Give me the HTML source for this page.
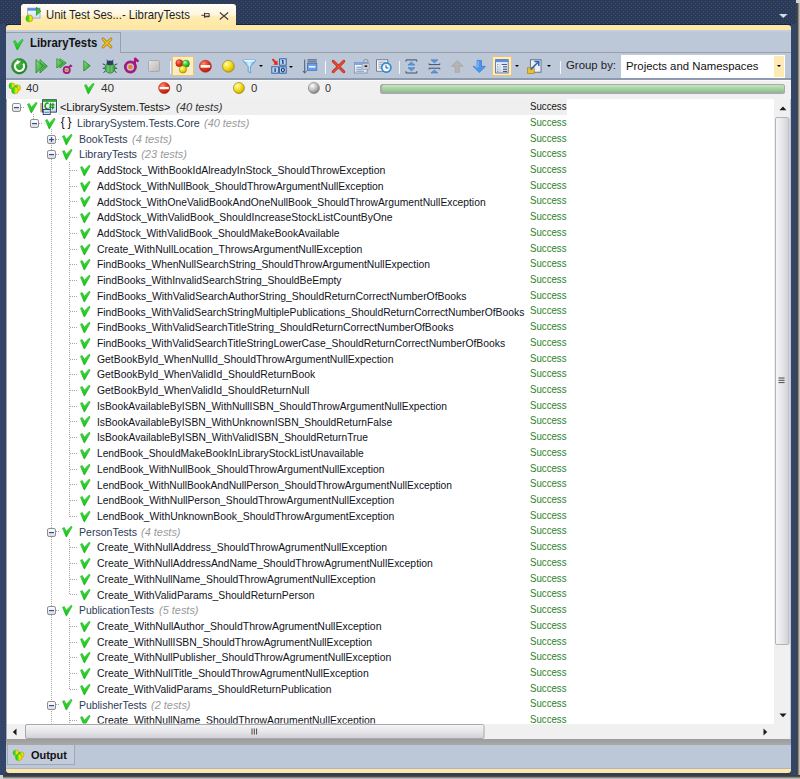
<!DOCTYPE html>
<html><head><meta charset="utf-8">
<style>
html,body{margin:0;padding:0}
body{width:800px;height:779px;position:relative;overflow:hidden;background:#d2d2d2;font-family:"Liberation Sans",sans-serif}
.a{position:absolute}
.t{position:absolute;white-space:nowrap;transform-origin:0 0;font-family:"Liberation Sans",sans-serif}
.i{position:absolute;overflow:visible}
.vd{position:absolute;width:1px;background:repeating-linear-gradient(to bottom,#a5a5a5 0,#a5a5a5 1px,transparent 1px,transparent 2px)}
.hd{position:absolute;height:1px;background:repeating-linear-gradient(to right,#a5a5a5 0,#a5a5a5 1px,transparent 1px,transparent 2px)}
.navy{background-color:#2a3a57;background-image:radial-gradient(circle at 1.5px 1.5px,#3b4e70 0.55px,transparent 0.95px),radial-gradient(circle at 3.5px 3.5px,#3b4e70 0.55px,transparent 0.95px);background-size:4px 4px}
.navyb{background-color:#33476a;background-image:radial-gradient(circle at 1.5px 1.5px,#2a3a58 0.55px,transparent 0.95px),radial-gradient(circle at 3.5px 3.5px,#2a3a58 0.55px,transparent 0.95px);background-size:4px 4px}
.sep{position:absolute;width:1px;background:#f4f6fa;top:60.7px;height:13.2px}
.dd{position:absolute;width:0;height:0;border-left:2.6px solid transparent;border-right:2.6px solid transparent;border-top:2.8px solid #000}
</style></head><body>
<svg width="0" height="0" style="position:absolute"><defs>
<linearGradient id="gchk" x1="0" y1="0" x2="0" y2="1"><stop offset="0" stop-color="#3ee83e"/><stop offset="1" stop-color="#12c012"/></linearGradient><path id="chk" d="M0.5 2.3 L2.3 1.5 L4.3 5.3 L9.3 0.1 L10.1 1.2 L4.6 10.8 L4.0 10.8 Z" fill="url(#gchk)" stroke="#0c9a0c" stroke-width="0.5" stroke-linejoin="round"/>
<linearGradient id="gexp" x1="0" y1="0" x2="0" y2="1"><stop offset="0" stop-color="#ffffff"/><stop offset="1" stop-color="#dcdcdc"/></linearGradient>
<linearGradient id="gplay" x1="0" y1="0" x2="1" y2="1"><stop offset="0" stop-color="#8ee08e"/><stop offset="1" stop-color="#1f9a1f"/></linearGradient>
<radialGradient id="gref" cx="0.4" cy="0.35" r="0.7"><stop offset="0" stop-color="#48b848"/><stop offset="1" stop-color="#1b861b"/></radialGradient>
<radialGradient id="gred" cx="0.35" cy="0.3" r="0.75"><stop offset="0" stop-color="#ff8a7a"/><stop offset="0.5" stop-color="#e83a1a"/><stop offset="1" stop-color="#b01a08"/></radialGradient>
<radialGradient id="gyel" cx="0.35" cy="0.3" r="0.75"><stop offset="0" stop-color="#fffbb0"/><stop offset="0.5" stop-color="#f4e020"/><stop offset="1" stop-color="#c8a800"/></radialGradient>
<radialGradient id="ggrn" cx="0.35" cy="0.3" r="0.75"><stop offset="0" stop-color="#c8ffb8"/><stop offset="0.5" stop-color="#40d030"/><stop offset="1" stop-color="#1a9010"/></radialGradient>
<radialGradient id="ggry" cx="0.35" cy="0.3" r="0.75"><stop offset="0" stop-color="#ffffff"/><stop offset="0.5" stop-color="#c4c4c4"/><stop offset="1" stop-color="#7c7c7c"/></radialGradient>
<linearGradient id="ghalf" x1="0" y1="0" x2="1" y2="0"><stop offset="0" stop-color="#22c81e"/><stop offset="0.38" stop-color="#3ce020"/><stop offset="0.62" stop-color="#f0e800"/><stop offset="1" stop-color="#e8c800"/></linearGradient>
<linearGradient id="gbug" x1="0" y1="0" x2="1" y2="0"><stop offset="0" stop-color="#3aa83a"/><stop offset="0.5" stop-color="#80d880"/><stop offset="1" stop-color="#2a942a"/></linearGradient>
<linearGradient id="gstop" x1="0" y1="0" x2="1" y2="1"><stop offset="0" stop-color="#e4e4e4"/><stop offset="1" stop-color="#b8b8b8"/></linearGradient>
<linearGradient id="gfun" x1="0" y1="0" x2="1" y2="0"><stop offset="0" stop-color="#5ab0e8"/><stop offset="0.5" stop-color="#d8f0ff"/><stop offset="1" stop-color="#4aa0e0"/></linearGradient>
<linearGradient id="gwin" x1="0" y1="0" x2="0" y2="1"><stop offset="0" stop-color="#ffffff"/><stop offset="1" stop-color="#d0def2"/></linearGradient>
<linearGradient id="gthumbv" x1="0" y1="0" x2="1" y2="0"><stop offset="0" stop-color="#f6f6f6"/><stop offset="0.5" stop-color="#e6e6ea"/><stop offset="1" stop-color="#cfcfd6"/></linearGradient>
<linearGradient id="gthumbh" x1="0" y1="0" x2="0" y2="1"><stop offset="0" stop-color="#f6f6f6"/><stop offset="0.5" stop-color="#e6e6ea"/><stop offset="1" stop-color="#cfcfd6"/></linearGradient>
</defs></svg>

<!-- frame & shadow -->
<div class="a" style="left:796px;top:3px;width:4px;height:776px;background:linear-gradient(to right,#363636,#4e4e4e 40%,#a4a4a4 75%,#d2d2d2)"></div>
<div class="a" style="left:3px;top:775px;width:797px;height:4px;background:linear-gradient(to bottom,#363636,#4e4e4e 40%,#a4a4a4 75%,#d2d2d2)"></div>
<div class="a navy" style="left:0;top:0;width:796px;height:775px"></div>
<div class="a navyb" style="left:0;top:24px;width:6px;height:751px"></div>
<div class="a navyb" style="left:790.5px;top:24px;width:5.5px;height:751px"></div>
<!-- top right dropdown arrow -->
<svg class="i" style="left:779.2px;top:14.3px;width:9px;height:5px" viewBox="0 0 9 5"><path d="M0 0H8.6L4.3 4Z" fill="#d4dae6"/></svg>

<!-- document tab -->
<div class="a" style="left:20.5px;top:3.8px;width:215px;height:21.2px;border-radius:3px 3px 0 0;background:linear-gradient(#fffdf7 0%,#fff6e0 50%,#ffedb8 58%,#ffe8a6 100%)"></div>
<div class="a" style="left:6px;top:24px;width:14.5px;height:1px;background:#0e2452"></div>
<div class="a" style="left:235.5px;top:24px;width:555px;height:1px;background:#0e2452"></div>
<svg class="i" style="left:25px;top:6px;width:17px;height:17px" viewBox="0 0 17 17">
 <rect x="2.6" y="2.1" width="12.4" height="10" fill="url(#gwin)" stroke="#8ca6cc" stroke-width="0.8"/>
 <rect x="2.6" y="2.1" width="12.4" height="2.6" fill="#5a8ce8"/>
 <path d="M11.4 1.3 L15.8 5.2 L11.4 9.3 Z" fill="#3cc83c" stroke="#159015" stroke-width="0.7" stroke-linejoin="round"/>
 <circle cx="4.35" cy="12.4" r="3.5" fill="url(#ghalf)" stroke="#a88a20" stroke-width="0.5"/>
</svg>
<svg class="i" style="left:201px;top:12px;width:9px;height:7px" viewBox="0 0 9 7">
 <path d="M0.3 3.3H3.5M3.5 0.8V5.8M3.5 1.6H8.2V4.8H3.5M4 4.2H8.2" stroke="#2a2a2a" stroke-width="0.9" fill="none"/>
</svg>
<svg class="i" style="left:219px;top:12px;width:10px;height:8px" viewBox="0 0 10 8">
 <path d="M0.8 0.5L9.2 7.5M9.2 0.5L0.8 7.5" stroke="#3c3c3c" stroke-width="1.1"/>
</svg>

<!-- yellow strip top -->
<div class="a" style="left:6px;top:25px;width:785px;height:5px;background:#ffe8a6;border-radius:3px 3px 0 0"></div>
<!-- panel -->
<div class="a" style="left:6px;top:29.5px;width:784.5px;height:740px;background:#bcc7d8"></div>
<div class="a" style="left:6px;top:29.5px;width:784.5px;height:2.5px;background:#c3cddc"></div>
<!-- inner tab -->
<div class="a" style="left:6px;top:32.2px;width:114.3px;height:20px;border-top:1px solid #9aa0aa;border-right:1px solid #9aa0aa"></div>
<div class="a" style="left:121px;top:52px;width:669.5px;height:1px;background:#9aa0aa"></div>
<svg class="i" style="left:12.5px;top:38.5px;width:10px;height:11px" viewBox="0 0 10 11"><path d="M0.5 2.3 L2.3 1.5 L4.3 5.3 L9.3 0.1 L10.1 1.2 L4.6 10.8 L4.0 10.8 Z" fill="url(#gchk)" stroke="#0c9a0c" stroke-width="0.5" stroke-linejoin="round"/></svg>
<svg class="i" style="left:102px;top:38px;width:10px;height:10px" viewBox="0 0 10 10">
 <path d="M1 1L9 9M9 1L1 9" stroke="#9a6a00" stroke-width="2.6" stroke-linecap="round"/>
 <path d="M1 1L9 9M9 1L1 9" stroke="#f6c818" stroke-width="1.6" stroke-linecap="round"/>
</svg>

<!-- toolbar icons -->
<svg class="i" style="left:10.5px;top:57.5px;width:17px;height:17px" viewBox="0 0 17 17">
 <circle cx="8.25" cy="8.25" r="7.7" fill="url(#gref)" stroke="#17801a" stroke-width="0.6"/>
 <path d="M12.2 5.6 A4.6 4.6 0 1 1 7.2 3.9" fill="none" stroke="#ffffff" stroke-width="2.1"/>
 <path d="M5.6 1.9 L9.6 3.6 L6.4 6.6 Z" fill="#ffffff"/>
</svg>
<svg class="i" style="left:34.5px;top:58.5px;width:14px;height:15px" viewBox="0 0 14 15">
 <path d="M1 0.6 L8.3 7.3 L1 14 Z" fill="url(#gplay)" stroke="#1e8a1e" stroke-width="0.8" stroke-linejoin="round"/>
 <path d="M5 0.6 L12.4 7.3 L5 14 L5 11.5 L9.5 7.3 L5 3.2 Z" fill="url(#gplay)" stroke="#1e8a1e" stroke-width="0.8" stroke-linejoin="round"/>
</svg>
<svg class="i" style="left:55.5px;top:57.5px;width:17px;height:17px" viewBox="0 0 17 17">
 <path d="M0.8 0.7 L7.6 4.9 L0.8 10 Z" fill="url(#gplay)" stroke="#1e8a1e" stroke-width="0.7" stroke-linejoin="round"/>
 <path d="M3.9 0.7 L10.3 4.9 L3.9 10 L3.9 8 L7.2 4.9 L3.9 2.7 Z" fill="url(#gplay)" stroke="#1e8a1e" stroke-width="0.7" stroke-linejoin="round"/>
 <circle cx="10.7" cy="11.9" r="3.1" fill="none" stroke="#a4197f" stroke-width="1.8"/>
 <circle cx="10.7" cy="11.9" r="1.5" fill="#e8841c"/>
 <path d="M13 9.6 L14.6 7.4 L16 8.6" fill="none" stroke="#a4197f" stroke-width="1.7"/>
</svg>
<svg class="i" style="left:82.5px;top:59.5px;width:8px;height:12px" viewBox="0 0 8 12">
 <path d="M0.8 0.7 L7.2 5.8 L0.8 11 Z" fill="url(#gplay)" stroke="#1e8a1e" stroke-width="0.8" stroke-linejoin="round"/>
</svg>
<svg class="i" style="left:101.5px;top:58.5px;width:16px;height:15px" viewBox="0 0 16 15">
 <path d="M3.2 6 L0.8 4.8 M3 9 L0.8 9.4 M3.6 11.6 L1.6 13.8 M12.8 6 L15.2 4.8 M13 9 L15.2 9.4 M12.4 11.6 L14.4 13.8 M6 2.6 L4.8 0.8 M10 2.6 L11.2 0.8" stroke="#2c3c5c" stroke-width="1"/>
 <ellipse cx="8" cy="9" rx="5" ry="5.2" fill="url(#gbug)" stroke="#1e6a2a" stroke-width="0.6"/>
 <ellipse cx="8" cy="3.9" rx="3.4" ry="2.4" fill="#2c3c5c"/>
 <path d="M8 4.5 V14" stroke="#1e6a2a" stroke-width="0.7"/>
</svg>
<svg class="i" style="left:123px;top:57px;width:17px;height:17px" viewBox="0 0 17 17">
 <circle cx="7.4" cy="10" r="5.1" fill="none" stroke="#a4197f" stroke-width="2.8"/>
 <circle cx="7.4" cy="10" r="2.3" fill="#e8841c"/>
 <path d="M11.6 8 L12.2 1.6 L15.4 4.6" fill="none" stroke="#a4197f" stroke-width="2.4" stroke-linejoin="round"/>
</svg>
<svg class="i" style="left:148px;top:60px;width:12px;height:12px" viewBox="0 0 12 12">
 <rect x="0.5" y="0.5" width="11" height="11" rx="1" fill="url(#gstop)" stroke="#a6a6a6" stroke-width="0.9"/>
</svg>
<div class="sep" style="left:170px"></div>
<div class="a" style="left:172px;top:56px;width:22.3px;height:19.5px;background:#fdedc3;border:1px solid #e8c47c;box-sizing:border-box"></div>
<svg class="i" style="left:175px;top:58.5px;width:15px;height:15px" viewBox="0 0 15 15">
 <circle cx="4.4" cy="4.2" r="3.6" fill="url(#gred)" stroke="#8a2010" stroke-width="0.4"/>
 <circle cx="10.9" cy="4.7" r="3.6" fill="url(#ggrn)" stroke="#1a7010" stroke-width="0.4"/>
 <circle cx="7.9" cy="10.4" r="3.6" fill="url(#gyel)" stroke="#8a6a10" stroke-width="0.5"/>
</svg>
<svg class="i" style="left:199px;top:59.5px;width:13px;height:13px" viewBox="0 0 13 13">
 <circle cx="6.4" cy="6.3" r="6" fill="url(#gred)" stroke="#a01808" stroke-width="0.5"/>
 <rect x="1.6" y="5.1" width="9.6" height="2.5" fill="#ffffff"/>
</svg>
<svg class="i" style="left:221.5px;top:59.5px;width:13px;height:13px" viewBox="0 0 13 13">
 <circle cx="6.4" cy="6.3" r="5.9" fill="url(#gyel)" stroke="#907010" stroke-width="0.6"/>
</svg>
<svg class="i" style="left:242px;top:58.5px;width:15px;height:15px" viewBox="0 0 15 15">
 <path d="M0.8 1.4 Q7 -0.2 13.8 1.4 L8.4 7.6 L8.4 13.8 L6.2 12.6 L6.2 7.6 Z" fill="url(#gfun)" stroke="#3a88c8" stroke-width="0.7" stroke-linejoin="round"/>
 <ellipse cx="7.3" cy="1.8" rx="6" ry="1" fill="#e8f6ff"/>
</svg>
<div class="dd" style="left:259.4px;top:65.4px"></div>
<svg class="i" style="left:271px;top:57.5px;width:16px;height:16px" viewBox="0 0 16 16">
 <path d="M0.8 1.4 L2.2 0.4 L5.2 3.6 L6.4 2.4 L6.8 7 L2.2 6.6 L3.6 5.2 Z" fill="#e82818"/>
 <rect x="8.6" y="0.8" width="6.6" height="6.4" fill="#b4d4f6" stroke="#2a5a9a" stroke-width="0.9"/>
 <rect x="0.8" y="8.8" width="6.6" height="6.4" fill="#b4d4f6" stroke="#2a5a9a" stroke-width="0.9"/>
 <rect x="8.6" y="8.8" width="6.6" height="6.4" fill="#b4d4f6" stroke="#2a5a9a" stroke-width="0.9"/>
 <path d="M11.9 2.2 V5.9 M4.1 10.2 V13.9 M11 2.9 L11.9 2.2" stroke="#10204a" stroke-width="1.1"/>
 <ellipse cx="11.9" cy="12" rx="1.5" ry="2" fill="none" stroke="#10204a" stroke-width="1"/>
</svg>
<div class="dd" style="left:289px;top:65.5px"></div>
<svg class="i" style="left:301.5px;top:58.5px;width:16px;height:15px" viewBox="0 0 16 15">
 <path d="M2.7 0.6 V13.6" stroke="#4c5c74" stroke-width="1"/>
 <path d="M0.9 11.8 L2.7 14.2 L4.5 11.8" fill="none" stroke="#4c5c74" stroke-width="1"/>
 <path d="M5.4 0.9 H14.8 M5.4 2.9 H14.8" stroke="#34445e" stroke-width="0.9"/>
 <rect x="5.4" y="4.5" width="9.4" height="6.8" fill="#6aa0ea" stroke="#3a6ab8" stroke-width="0.7"/>
 <rect x="6.8" y="7.1" width="6.6" height="1.4" fill="#ffffff"/>
</svg>
<div class="sep" style="left:325px"></div>
<svg class="i" style="left:331.5px;top:59.5px;width:13px;height:13px" viewBox="0 0 13 13">
 <path d="M1.2 1.2L11.8 11.8M11.8 1.2L1.2 11.8" stroke="#a02010" stroke-width="2.8" stroke-linecap="round"/>
 <path d="M1.2 1.2L11.8 11.8M11.8 1.2L1.2 11.8" stroke="#f04830" stroke-width="1.8" stroke-linecap="round"/>
</svg>
<svg class="i" style="left:353.5px;top:58.5px;width:16px;height:15px" viewBox="0 0 16 15">
 <rect x="0.6" y="3.6" width="12.6" height="10.4" fill="url(#gwin)" stroke="#7088a8" stroke-width="0.7"/>
 <rect x="0.6" y="3.6" width="12.6" height="2.4" fill="#7aa8e8"/>
 <path d="M2.4 8.2H8 M2.4 10.2H8 M2.4 12.2H10" stroke="#6a82a6" stroke-width="0.8"/>
 <rect x="8.2" y="4.4" width="7.2" height="6" rx="0.8" fill="#c8cfd8" stroke="#8a96a6" stroke-width="0.6"/>
 <path d="M9.6 4.4 V2.6 A2.2 2.2 0 0 1 14 2.6 V4.4" fill="none" stroke="#8a96a6" stroke-width="1"/>
 <rect x="10.6" y="6.4" width="2.6" height="1.6" fill="#1a1a1a"/>
</svg>
<svg class="i" style="left:376px;top:58.5px;width:16px;height:15px" viewBox="0 0 16 15">
 <rect x="0.6" y="0.8" width="11.2" height="11.4" fill="#f6f6f6" stroke="#5a6a80" stroke-width="0.8"/>
 <path d="M2.4 3.2H9.6 M2.4 5.2H9.6 M2.4 7.2H8 M2.4 9.2H7" stroke="#7a8aa0" stroke-width="0.8"/>
 <circle cx="10.3" cy="8.6" r="5" fill="#3a9ae6" stroke="#1a6ab0" stroke-width="0.6"/>
 <circle cx="10.3" cy="8.6" r="3.6" fill="#f4fbff"/>
 <path d="M10 6.2 V9 H12.4" fill="none" stroke="#1a3a6a" stroke-width="0.9"/>
</svg>
<div class="sep" style="left:399px"></div>
<svg class="i" style="left:405px;top:58.5px;width:13px;height:15px" viewBox="0 0 13 15">
 <path d="M1 2.6 V0.9 H11.8 V2.6 M1 12.2 V14 H11.8 V12.2" fill="none" stroke="#34445e" stroke-width="0.9"/>
 <path d="M6.4 2.9 L9.8 6.1 H3 Z" fill="#5a9ae6" stroke="#2a6ab8" stroke-width="0.5"/>
 <path d="M6.4 11.9 L9.8 8.7 H3 Z" fill="#5a9ae6" stroke="#2a6ab8" stroke-width="0.5"/>
</svg>
<svg class="i" style="left:427.5px;top:58.5px;width:13px;height:15px" viewBox="0 0 13 15">
 <path d="M1 4.4 V5.6 H11.8 V4.4 M1 10.4 V9.2 H11.8 V10.4" fill="none" stroke="#34445e" stroke-width="0.9"/>
 <path d="M6.4 3.9 L9.8 0.8 H3 Z" fill="#5a9ae6" stroke="#2a6ab8" stroke-width="0.5"/>
 <path d="M6.4 10.9 L9.8 14 H3 Z" fill="#5a9ae6" stroke="#2a6ab8" stroke-width="0.5"/>
</svg>
<svg class="i" style="left:450.5px;top:59.5px;width:13px;height:13px" viewBox="0 0 13 13">
 <path d="M6.3 0.4 L12.2 6.3 H8.4 V12.4 H4.2 V6.3 H0.4 Z" fill="#b4b4b4" stroke="#9a9a9a" stroke-width="0.5" stroke-linejoin="round"/>
</svg>
<svg class="i" style="left:473px;top:59.5px;width:13px;height:13px" viewBox="0 0 13 13">
 <path d="M6.3 12.6 L12.4 6.4 H8.5 V0.4 H4.1 V6.4 H0.2 Z" fill="#4a98ee" stroke="#2a6ac0" stroke-width="0.6" stroke-linejoin="round"/>
 <path d="M5 1 V6.8 H2" fill="none" stroke="#b8dcff" stroke-width="0.7"/>
</svg>
<div class="a" style="left:491.6px;top:55.8px;width:20.2px;height:20.5px;background:#fdedc3;border:1px solid #e8c47c;box-sizing:border-box"></div>
<svg class="i" style="left:495px;top:58.5px;width:14px;height:15px" viewBox="0 0 14 15">
 <rect x="0.6" y="0.6" width="12.6" height="13.4" fill="url(#gwin)" stroke="#4a6a98" stroke-width="0.8"/>
 <rect x="0.6" y="0.6" width="12.6" height="2.6" fill="#5a8ee6"/>
 <path d="M2.2 5.4H3.4 M2.2 7.8H3.4 M2.2 10.2H3.4 M2.2 12.4H3.4" stroke="#6a7a90" stroke-width="0.9"/>
 <path d="M5 4.6V13.4" stroke="#a8b8cc" stroke-width="0.6"/>
 <path d="M6.6 5.4H12 M8 7.8H12 M8 10.2H12 M8 12.4H12" stroke="#3a4a64" stroke-width="1"/>
</svg>
<div class="dd" style="left:515px;top:65px"></div>
<svg class="i" style="left:526.5px;top:58.5px;width:15px;height:15px" viewBox="0 0 15 15">
 <rect x="3.4" y="0.8" width="10.6" height="12.4" fill="#eef0f4" stroke="#5a6a80" stroke-width="0.9"/>
 <rect x="0.6" y="8.8" width="6.6" height="5.6" fill="#e8c030" stroke="#a07810" stroke-width="0.6"/>
 <path d="M3.6 10.6 L11 3.2" stroke="#2a64b8" stroke-width="1.5"/>
 <path d="M7.4 2.6 H11.8 V7" fill="none" stroke="#2a64b8" stroke-width="1.5"/>
</svg>
<div class="dd" style="left:547.4px;top:65.2px"></div>
<div class="sep" style="left:560px"></div>
<!-- combo -->
<div class="a" style="left:620.8px;top:54.8px;width:164.4px;height:22.8px;background:#ffffff"></div>
<div class="a" style="left:773.6px;top:56px;width:10.6px;height:20.7px;background:#ffeab4"></div>
<div class="dd" style="left:776.5px;top:65px;border-left-width:2.4px;border-right-width:2.4px;border-top-width:2.6px"></div>

<!-- toolbar bottom line -->
<div class="a" style="left:6px;top:78px;width:784.5px;height:1.5px;background:#8e9ab0"></div>
<!-- status bar -->
<div class="a" style="left:6px;top:79.5px;width:784.5px;height:19.5px;background:#f0f0f0"></div>
<div class="a" style="left:7px;top:80px;width:783px;height:1px;background:#fafafa"></div>
<svg class="i" style="left:8px;top:82px;width:14px;height:13px" viewBox="0 0 14 13">
 <circle cx="4" cy="3.9" r="3.1" fill="url(#ghalf)" stroke="#8a7a10" stroke-width="0.3"/>
 <circle cx="9.6" cy="5.8" r="3.1" fill="url(#ghalf)" stroke="#8a7a10" stroke-width="0.3"/>
 <circle cx="7" cy="8.4" r="3.5" fill="url(#ghalf)" stroke="#8a7a10" stroke-width="0.3"/>
</svg>
<svg class="i" style="left:84px;top:83.3px;width:10px;height:11px" viewBox="0 0 10 11"><path d="M0.5 2.3 L2.3 1.5 L4.3 5.3 L9.3 0.1 L10.1 1.2 L4.6 10.8 L4.0 10.8 Z" fill="url(#gchk)" stroke="#0c9a0c" stroke-width="0.5" stroke-linejoin="round"/></svg>
<svg class="i" style="left:158px;top:82.3px;width:12.5px;height:12px" viewBox="0 0 12.5 12">
 <circle cx="6.2" cy="6" r="5.6" fill="url(#gred)" stroke="#a01808" stroke-width="0.5"/>
 <rect x="1.6" y="4.9" width="9.2" height="2.3" fill="#ffffff"/>
</svg>
<svg class="i" style="left:233px;top:82.3px;width:12px;height:12px" viewBox="0 0 12 12">
 <circle cx="5.9" cy="6" r="5.5" fill="url(#gyel)" stroke="#907010" stroke-width="0.6"/>
</svg>
<svg class="i" style="left:307.5px;top:82.3px;width:12px;height:12px" viewBox="0 0 12 12">
 <circle cx="5.9" cy="6" r="5.5" fill="url(#ggry)" stroke="#707070" stroke-width="0.6"/>
</svg>
<div class="a" style="left:380.3px;top:84.3px;width:405.2px;height:9.3px;border-radius:2.5px;background:#a9a9a9"></div>
<div class="a" style="left:381.5px;top:85.4px;width:402.8px;height:7.1px;border-radius:1.5px;background:linear-gradient(#c6e4c4,#a8d4a4 50%,#8cc48a)"></div>

<!-- tree -->
<div class="a" style="left:7px;top:98.8px;width:767.2px;height:624.8px;background:#ffffff"></div>
<div class="a" style="left:57.8px;top:99px;width:509.2px;height:15.6px;background:#efefef"></div>
<div class="a" style="left:6px;top:98.8px;width:1px;height:640.4px;background:#a8a8a8"></div>
<!-- vertical scrollbar -->
<div class="a" style="left:774.2px;top:98.8px;width:16.3px;height:640.5px;background:#f0f0f0"></div>
<svg class="i" style="left:778.6px;top:105.6px;width:8px;height:5px" viewBox="0 0 8 5"><path d="M0.4 4.3 L4 0.4 L7.4 4.3Z" fill="#1a1a1a"/></svg>
<svg class="i" style="left:774.5px;top:117px;width:14.5px;height:528px" viewBox="0 0 14.5 528" preserveAspectRatio="none">
 <rect x="0.5" y="0.5" width="13.5" height="527" rx="1.5" fill="url(#gthumbv)" stroke="#b4b4b8" stroke-width="1"/>
</svg>
<svg class="i" style="left:778px;top:377px;width:7px;height:7px" viewBox="0 0 7 7"><path d="M0.5 1H6.5M0.5 3.3H6.5M0.5 5.6H6.5" stroke="#4a4a4a" stroke-width="1"/></svg>
<svg class="i" style="left:778.8px;top:712.8px;width:8px;height:5px" viewBox="0 0 8 5"><path d="M0.5 0.5 L4 4.2 L7.5 0.5Z" fill="#1a1a1a"/></svg>
<!-- h scrollbar -->
<div class="a" style="left:7px;top:723.6px;width:767.2px;height:15.7px;background:#f0f0f0"></div>
<svg class="i" style="left:12.2px;top:727.6px;width:5px;height:8px" viewBox="0 0 5 8"><path d="M4.5 0.5 L0.8 4 L4.5 7.5Z" fill="#1a1a1a"/></svg>
<svg class="i" style="left:25px;top:724px;width:459.5px;height:15px" viewBox="0 0 459.5 15" preserveAspectRatio="none">
 <rect x="0.5" y="0.5" width="458.5" height="14" rx="1.5" fill="url(#gthumbh)" stroke="#a8a8ac" stroke-width="1"/>
</svg>
<svg class="i" style="left:251px;top:727.5px;width:7px;height:7px" viewBox="0 0 7 7"><path d="M1 0.5V6.5M3.3 0.5V6.5M5.6 0.5V6.5" stroke="#4a4a4a" stroke-width="1"/></svg>
<svg class="i" style="left:762.5px;top:727.5px;width:5px;height:8px" viewBox="0 0 5 8"><path d="M0.5 0.5 L4.2 4 L0.5 7.5Z" fill="#1a1a1a"/></svg>
<!-- gray band -->
<div class="a" style="left:6px;top:739.2px;width:784.5px;height:6.3px;background:linear-gradient(#9c9c9c,#a9a9a9)"></div>
<div class="a" style="left:6px;top:767.6px;width:784.5px;height:1px;background:#aab5c6"></div>
<!-- output tab -->
<div class="a" style="left:7.3px;top:744.5px;width:68.2px;height:20.2px;border:1px solid #a0a8b4;border-top:none;background:#c2ccdb;box-sizing:border-box"></div>
<svg class="i" style="left:12px;top:749px;width:13px;height:12px" viewBox="0 0 13 12">
 <circle cx="3.9" cy="3.8" r="2.9" fill="url(#ghalf)" stroke="#8a7a10" stroke-width="0.3"/>
 <circle cx="9.1" cy="5.7" r="2.9" fill="url(#ghalf)" stroke="#8a7a10" stroke-width="0.3"/>
 <circle cx="6.7" cy="8.4" r="3.3" fill="url(#ghalf)" stroke="#8a7a10" stroke-width="0.3"/>
</svg>
<!-- bottom yellow strip -->
<div class="a" style="left:6px;top:769px;width:784.5px;height:3.8px;background:#ffe8a6;border-radius:0 0 3px 3px"></div>


<div class="a" style="left:0;top:0;width:800px;height:779px;clip-path:inset(98.8px 25.8px 55.4px 7px)"><div class="t" style="left:60.30px;top:102.29px;font-size:11px;line-height:11px;color:#111;transform:scaleX(0.9859);">&lt;LibrarySystem.Tests&gt;</div><div class="t" style="left:175.60px;top:102.29px;font-size:11px;line-height:11px;color:#333;font-style:italic;transform:scaleX(1.0142);">(40 tests)</div><div class="t" style="left:529.75px;top:101.09px;font-size:11px;line-height:11px;color:#111;transform:scaleX(0.8780);">Success</div><div class="t" style="left:76.80px;top:118.01px;font-size:11px;line-height:11px;color:#2c3b58;transform:scaleX(0.9744);">LibrarySystem.Tests.Core</div><div class="t" style="left:204.20px;top:118.01px;font-size:11px;line-height:11px;color:#9a9a9a;font-style:italic;transform:scaleX(0.9902);">(40 tests)</div><div class="t" style="left:529.75px;top:116.81px;font-size:11px;line-height:11px;color:#2a822a;transform:scaleX(0.8780);">Success</div><div class="t" style="left:78.80px;top:133.72px;font-size:11px;line-height:11px;color:#2c3b58;transform:scaleX(0.9538);">BookTests</div><div class="t" style="left:131.60px;top:133.72px;font-size:11px;line-height:11px;color:#9a9a9a;font-style:italic;transform:scaleX(1.0043);">(4 tests)</div><div class="t" style="left:529.75px;top:132.52px;font-size:11px;line-height:11px;color:#2a822a;transform:scaleX(0.8780);">Success</div><div class="t" style="left:78.80px;top:149.44px;font-size:11px;line-height:11px;color:#2c3b58;transform:scaleX(0.9781);">LibraryTests</div><div class="t" style="left:141.20px;top:149.44px;font-size:11px;line-height:11px;color:#9a9a9a;font-style:italic;">(23 tests)</div><div class="t" style="left:529.75px;top:148.24px;font-size:11px;line-height:11px;color:#2a822a;transform:scaleX(0.8780);">Success</div><div class="t" style="left:97.00px;top:165.16px;font-size:11px;line-height:11px;color:#10131c;transform:scaleX(0.9525);">AddStock_WithBookIdAlreadyInStock_ShouldThrowException</div><div class="t" style="left:529.75px;top:163.96px;font-size:11px;line-height:11px;color:#2a822a;transform:scaleX(0.8780);">Success</div><div class="t" style="left:97.00px;top:180.88px;font-size:11px;line-height:11px;color:#10131c;transform:scaleX(0.9394);">AddStock_WithNullBook_ShouldThrowArgumentNullException</div><div class="t" style="left:529.75px;top:179.68px;font-size:11px;line-height:11px;color:#2a822a;transform:scaleX(0.8780);">Success</div><div class="t" style="left:97.00px;top:196.60px;font-size:11px;line-height:11px;color:#10131c;transform:scaleX(0.9365);">AddStock_WithOneValidBookAndOneNullBook_ShouldThrowArgumentNullException</div><div class="t" style="left:529.75px;top:195.40px;font-size:11px;line-height:11px;color:#2a822a;transform:scaleX(0.8780);">Success</div><div class="t" style="left:97.00px;top:212.31px;font-size:11px;line-height:11px;color:#10131c;transform:scaleX(0.9408);">AddStock_WithValidBook_ShouldIncreaseStockListCountByOne</div><div class="t" style="left:529.75px;top:211.11px;font-size:11px;line-height:11px;color:#2a822a;transform:scaleX(0.8780);">Success</div><div class="t" style="left:97.00px;top:228.03px;font-size:11px;line-height:11px;color:#10131c;transform:scaleX(0.9298);">AddStock_WithValidBook_ShouldMakeBookAvailable</div><div class="t" style="left:529.75px;top:226.83px;font-size:11px;line-height:11px;color:#2a822a;transform:scaleX(0.8780);">Success</div><div class="t" style="left:97.00px;top:243.75px;font-size:11px;line-height:11px;color:#10131c;transform:scaleX(0.9516);">Create_WithNullLocation_ThrowsArgumentNullException</div><div class="t" style="left:529.75px;top:242.55px;font-size:11px;line-height:11px;color:#2a822a;transform:scaleX(0.8780);">Success</div><div class="t" style="left:97.00px;top:259.47px;font-size:11px;line-height:11px;color:#10131c;transform:scaleX(0.9371);">FindBooks_WhenNullSearchString_ShouldThrowArgumentNullExpection</div><div class="t" style="left:529.75px;top:258.27px;font-size:11px;line-height:11px;color:#2a822a;transform:scaleX(0.8780);">Success</div><div class="t" style="left:97.00px;top:275.19px;font-size:11px;line-height:11px;color:#10131c;transform:scaleX(0.9387);">FindBooks_WithInvalidSearchString_ShouldBeEmpty</div><div class="t" style="left:529.75px;top:273.99px;font-size:11px;line-height:11px;color:#2a822a;transform:scaleX(0.8780);">Success</div><div class="t" style="left:97.00px;top:290.90px;font-size:11px;line-height:11px;color:#10131c;transform:scaleX(0.9463);">FindBooks_WithValidSearchAuthorString_ShouldReturnCorrectNumberOfBooks</div><div class="t" style="left:529.75px;top:289.70px;font-size:11px;line-height:11px;color:#2a822a;transform:scaleX(0.8780);">Success</div><div class="t" style="left:97.00px;top:306.62px;font-size:11px;line-height:11px;color:#10131c;transform:scaleX(0.9385);">FindBooks_WithValidSearchStringMultiplePublications_ShouldReturnCorrectNumberOfBooks</div><div class="t" style="left:529.75px;top:305.42px;font-size:11px;line-height:11px;color:#2a822a;transform:scaleX(0.8780);">Success</div><div class="t" style="left:97.00px;top:322.34px;font-size:11px;line-height:11px;color:#10131c;transform:scaleX(0.9425);">FindBooks_WithValidSearchTitleString_ShouldReturnCorrectNumberOfBooks</div><div class="t" style="left:529.75px;top:321.14px;font-size:11px;line-height:11px;color:#2a822a;transform:scaleX(0.8780);">Success</div><div class="t" style="left:97.00px;top:338.06px;font-size:11px;line-height:11px;color:#10131c;transform:scaleX(0.9401);">FindBooks_WithValidSearchTitleStringLowerCase_ShouldReturnCorrectNumberOfBooks</div><div class="t" style="left:529.75px;top:336.86px;font-size:11px;line-height:11px;color:#2a822a;transform:scaleX(0.8780);">Success</div><div class="t" style="left:97.00px;top:353.78px;font-size:11px;line-height:11px;color:#10131c;transform:scaleX(0.9450);">GetBookById_WhenNullId_ShouldThrowArgumentNullExpection</div><div class="t" style="left:529.75px;top:352.58px;font-size:11px;line-height:11px;color:#2a822a;transform:scaleX(0.8780);">Success</div><div class="t" style="left:97.00px;top:369.49px;font-size:11px;line-height:11px;color:#10131c;transform:scaleX(0.9448);">GetBookById_WhenValidId_ShouldReturnBook</div><div class="t" style="left:529.75px;top:368.29px;font-size:11px;line-height:11px;color:#2a822a;transform:scaleX(0.8780);">Success</div><div class="t" style="left:97.00px;top:385.21px;font-size:11px;line-height:11px;color:#10131c;transform:scaleX(0.9439);">GetBookById_WhenValidId_ShouldReturnNull</div><div class="t" style="left:529.75px;top:384.01px;font-size:11px;line-height:11px;color:#2a822a;transform:scaleX(0.8780);">Success</div><div class="t" style="left:97.00px;top:400.93px;font-size:11px;line-height:11px;color:#10131c;transform:scaleX(0.9326);">IsBookAvailableByISBN_WithNullISBN_ShouldThrowArgumentNullExpection</div><div class="t" style="left:529.75px;top:399.73px;font-size:11px;line-height:11px;color:#2a822a;transform:scaleX(0.8780);">Success</div><div class="t" style="left:97.00px;top:416.65px;font-size:11px;line-height:11px;color:#10131c;transform:scaleX(0.9323);">IsBookAvailableByISBN_WithUnknownISBN_ShouldReturnFalse</div><div class="t" style="left:529.75px;top:415.45px;font-size:11px;line-height:11px;color:#2a822a;transform:scaleX(0.8780);">Success</div><div class="t" style="left:97.00px;top:432.37px;font-size:11px;line-height:11px;color:#10131c;transform:scaleX(0.9354);">IsBookAvailableByISBN_WithValidISBN_ShouldReturnTrue</div><div class="t" style="left:529.75px;top:431.17px;font-size:11px;line-height:11px;color:#2a822a;transform:scaleX(0.8780);">Success</div><div class="t" style="left:97.00px;top:448.08px;font-size:11px;line-height:11px;color:#10131c;transform:scaleX(0.9296);">LendBook_ShouldMakeBookInLibraryStockListUnavailable</div><div class="t" style="left:529.75px;top:446.88px;font-size:11px;line-height:11px;color:#2a822a;transform:scaleX(0.8780);">Success</div><div class="t" style="left:97.00px;top:463.80px;font-size:11px;line-height:11px;color:#10131c;transform:scaleX(0.9345);">LendBook_WithNullBook_ShouldThrowArgumentNullException</div><div class="t" style="left:529.75px;top:462.60px;font-size:11px;line-height:11px;color:#2a822a;transform:scaleX(0.8780);">Success</div><div class="t" style="left:97.00px;top:479.52px;font-size:11px;line-height:11px;color:#10131c;transform:scaleX(0.9319);">LendBook_WithNullBookAndNullPerson_ShouldThrowArgumentNullException</div><div class="t" style="left:529.75px;top:478.32px;font-size:11px;line-height:11px;color:#2a822a;transform:scaleX(0.8780);">Success</div><div class="t" style="left:97.00px;top:495.24px;font-size:11px;line-height:11px;color:#10131c;transform:scaleX(0.9365);">LendBook_WithNullPerson_ShouldThrowArgumentNullException</div><div class="t" style="left:529.75px;top:494.04px;font-size:11px;line-height:11px;color:#2a822a;transform:scaleX(0.8780);">Success</div><div class="t" style="left:97.00px;top:510.96px;font-size:11px;line-height:11px;color:#10131c;transform:scaleX(0.9419);">LendBook_WithUnknownBook_ShouldThrowArgumentException</div><div class="t" style="left:529.75px;top:509.76px;font-size:11px;line-height:11px;color:#2a822a;transform:scaleX(0.8780);">Success</div><div class="t" style="left:78.80px;top:526.67px;font-size:11px;line-height:11px;color:#2c3b58;transform:scaleX(0.9583);">PersonTests</div><div class="t" style="left:141.10px;top:526.67px;font-size:11px;line-height:11px;color:#9a9a9a;font-style:italic;transform:scaleX(0.9942);">(4 tests)</div><div class="t" style="left:529.75px;top:525.47px;font-size:11px;line-height:11px;color:#2a822a;transform:scaleX(0.8780);">Success</div><div class="t" style="left:97.00px;top:542.39px;font-size:11px;line-height:11px;color:#10131c;transform:scaleX(0.9467);">Create_WithNullAddress_ShouldThrowAgrumentNullException</div><div class="t" style="left:529.75px;top:541.19px;font-size:11px;line-height:11px;color:#2a822a;transform:scaleX(0.8780);">Success</div><div class="t" style="left:97.00px;top:558.11px;font-size:11px;line-height:11px;color:#10131c;transform:scaleX(0.9456);">Create_WithNullAddressAndName_ShouldThrowAgrumentNullException</div><div class="t" style="left:529.75px;top:556.91px;font-size:11px;line-height:11px;color:#2a822a;transform:scaleX(0.8780);">Success</div><div class="t" style="left:97.00px;top:573.83px;font-size:11px;line-height:11px;color:#10131c;transform:scaleX(0.9431);">Create_WithNullName_ShouldThrowAgrumentNullException</div><div class="t" style="left:529.75px;top:572.63px;font-size:11px;line-height:11px;color:#2a822a;transform:scaleX(0.8780);">Success</div><div class="t" style="left:97.00px;top:589.55px;font-size:11px;line-height:11px;color:#10131c;transform:scaleX(0.9423);">Create_WithValidParams_ShouldReturnPerson</div><div class="t" style="left:529.75px;top:588.35px;font-size:11px;line-height:11px;color:#2a822a;transform:scaleX(0.8780);">Success</div><div class="t" style="left:78.80px;top:605.26px;font-size:11px;line-height:11px;color:#2c3b58;transform:scaleX(0.9436);">PublicationTests</div><div class="t" style="left:158.50px;top:605.26px;font-size:11px;line-height:11px;color:#9a9a9a;font-style:italic;transform:scaleX(0.9942);">(5 tests)</div><div class="t" style="left:529.75px;top:604.06px;font-size:11px;line-height:11px;color:#2a822a;transform:scaleX(0.8780);">Success</div><div class="t" style="left:97.00px;top:620.98px;font-size:11px;line-height:11px;color:#10131c;transform:scaleX(0.9535);">Create_WithNullAuthor_ShouldThrowAgrumentNullException</div><div class="t" style="left:529.75px;top:619.78px;font-size:11px;line-height:11px;color:#2a822a;transform:scaleX(0.8780);">Success</div><div class="t" style="left:97.00px;top:636.70px;font-size:11px;line-height:11px;color:#10131c;transform:scaleX(0.9433);">Create_WithNullISBN_ShouldThrowAgrumentNullException</div><div class="t" style="left:529.75px;top:635.50px;font-size:11px;line-height:11px;color:#2a822a;transform:scaleX(0.8780);">Success</div><div class="t" style="left:97.00px;top:652.42px;font-size:11px;line-height:11px;color:#10131c;transform:scaleX(0.9435);">Create_WithNullPublisher_ShouldThrowAgrumentNullException</div><div class="t" style="left:529.75px;top:651.22px;font-size:11px;line-height:11px;color:#2a822a;transform:scaleX(0.8780);">Success</div><div class="t" style="left:97.00px;top:668.14px;font-size:11px;line-height:11px;color:#10131c;transform:scaleX(0.9489);">Create_WithNullTitle_ShouldThrowAgrumentNullException</div><div class="t" style="left:529.75px;top:666.94px;font-size:11px;line-height:11px;color:#2a822a;transform:scaleX(0.8780);">Success</div><div class="t" style="left:97.00px;top:683.85px;font-size:11px;line-height:11px;color:#10131c;transform:scaleX(0.9385);">Create_WithValidParams_ShouldReturnPublication</div><div class="t" style="left:529.75px;top:682.65px;font-size:11px;line-height:11px;color:#2a822a;transform:scaleX(0.8780);">Success</div><div class="t" style="left:78.80px;top:699.57px;font-size:11px;line-height:11px;color:#2c3b58;transform:scaleX(0.9478);">PublisherTests</div><div class="t" style="left:150.90px;top:699.57px;font-size:11px;line-height:11px;color:#9a9a9a;font-style:italic;transform:scaleX(0.9942);">(2 tests)</div><div class="t" style="left:529.75px;top:698.37px;font-size:11px;line-height:11px;color:#2a822a;transform:scaleX(0.8780);">Success</div><div class="t" style="left:97.00px;top:715.29px;font-size:11px;line-height:11px;color:#10131c;transform:scaleX(0.9431);">Create_WithNullName_ShouldThrowAgrumentNullException</div><div class="t" style="left:529.75px;top:714.09px;font-size:11px;line-height:11px;color:#2a822a;transform:scaleX(0.8780);">Success</div><div class="vd" style="left:51px;top:129px;height:595px"></div><div class="vd" style="left:33px;top:114px;height:6px"></div><div class="vd" style="left:69px;top:161.972px;height:354.79600000000005px"></div><div class="hd" style="left:70px;top:170px;width:7px"></div><div class="hd" style="left:70px;top:186px;width:7px"></div><div class="hd" style="left:70px;top:201px;width:7px"></div><div class="hd" style="left:70px;top:217px;width:7px"></div><div class="hd" style="left:70px;top:233px;width:7px"></div><div class="hd" style="left:70px;top:249px;width:7px"></div><div class="hd" style="left:70px;top:264px;width:7px"></div><div class="hd" style="left:70px;top:280px;width:7px"></div><div class="hd" style="left:70px;top:296px;width:7px"></div><div class="hd" style="left:70px;top:311px;width:7px"></div><div class="hd" style="left:70px;top:327px;width:7px"></div><div class="hd" style="left:70px;top:343px;width:7px"></div><div class="hd" style="left:70px;top:359px;width:7px"></div><div class="hd" style="left:70px;top:374px;width:7px"></div><div class="hd" style="left:70px;top:390px;width:7px"></div><div class="hd" style="left:70px;top:406px;width:7px"></div><div class="hd" style="left:70px;top:421px;width:7px"></div><div class="hd" style="left:70px;top:437px;width:7px"></div><div class="hd" style="left:70px;top:453px;width:7px"></div><div class="hd" style="left:70px;top:469px;width:7px"></div><div class="hd" style="left:70px;top:484px;width:7px"></div><div class="hd" style="left:70px;top:500px;width:7px"></div><div class="hd" style="left:70px;top:516px;width:7px"></div><div class="vd" style="left:69px;top:539.2040000000001px;height:56.153999999999996px"></div><div class="hd" style="left:70px;top:547px;width:7px"></div><div class="hd" style="left:70px;top:563px;width:7px"></div><div class="hd" style="left:70px;top:579px;width:7px"></div><div class="hd" style="left:70px;top:594px;width:7px"></div><div class="vd" style="left:69px;top:617.794px;height:71.87200000000007px"></div><div class="hd" style="left:70px;top:626px;width:7px"></div><div class="hd" style="left:70px;top:642px;width:7px"></div><div class="hd" style="left:70px;top:657px;width:7px"></div><div class="hd" style="left:70px;top:673px;width:7px"></div><div class="hd" style="left:70px;top:689px;width:7px"></div><div class="vd" style="left:69px;top:712.102px;height:11.898000000000025px"></div><div class="hd" style="left:70px;top:720px;width:7px"></div><div class="hd" style="left:21px;top:107px;width:3px"></div><div class="hd" style="left:39px;top:123px;width:3px"></div><div class="hd" style="left:56px;top:139px;width:4px"></div><div class="hd" style="left:56px;top:154px;width:4px"></div><div class="hd" style="left:56px;top:531px;width:4px"></div><div class="hd" style="left:56px;top:610px;width:4px"></div><div class="hd" style="left:56px;top:704px;width:4px"></div><svg class="i" style="left:12px;top:103.3px;width:9px;height:9px;" viewBox="0 0 9 9"><rect x="0.5" y="0.5" width="8" height="8" rx="1.5" fill="url(#gexp)" stroke="#8e8f8f" stroke-width="1"/><rect x="2" y="4" width="5" height="1.2" fill="#2f4fa0"/></svg><svg class="i" style="left:27px;top:102.1px;width:10px;height:11px;" viewBox="0 0 10 11"><path d="M0.5 2.3 L2.3 1.5 L4.3 5.3 L9.3 0.1 L10.1 1.2 L4.6 10.8 L4.0 10.8 Z" fill="url(#gchk)" stroke="#0c9a0c" stroke-width="0.5" stroke-linejoin="round"/></svg><svg class="i" style="left:29.5px;top:119.018px;width:9px;height:9px;" viewBox="0 0 9 9"><rect x="0.5" y="0.5" width="8" height="8" rx="1.5" fill="url(#gexp)" stroke="#8e8f8f" stroke-width="1"/><rect x="2" y="4" width="5" height="1.2" fill="#2f4fa0"/></svg><svg class="i" style="left:44.8px;top:117.818px;width:10px;height:11px;" viewBox="0 0 10 11"><path d="M0.5 2.3 L2.3 1.5 L4.3 5.3 L9.3 0.1 L10.1 1.2 L4.6 10.8 L4.0 10.8 Z" fill="url(#gchk)" stroke="#0c9a0c" stroke-width="0.5" stroke-linejoin="round"/></svg><svg class="i" style="left:47px;top:134.736px;width:9px;height:9px;" viewBox="0 0 9 9"><rect x="0.5" y="0.5" width="8" height="8" rx="1.5" fill="url(#gexp)" stroke="#8e8f8f" stroke-width="1"/><rect x="2" y="4" width="5" height="1.2" fill="#2f4fa0"/><rect x="3.9" y="2" width="1.2" height="5" fill="#2f4fa0"/></svg><svg class="i" style="left:62.3px;top:133.536px;width:10px;height:11px;" viewBox="0 0 10 11"><path d="M0.5 2.3 L2.3 1.5 L4.3 5.3 L9.3 0.1 L10.1 1.2 L4.6 10.8 L4.0 10.8 Z" fill="url(#gchk)" stroke="#0c9a0c" stroke-width="0.5" stroke-linejoin="round"/></svg><svg class="i" style="left:47px;top:150.45399999999998px;width:9px;height:9px;" viewBox="0 0 9 9"><rect x="0.5" y="0.5" width="8" height="8" rx="1.5" fill="url(#gexp)" stroke="#8e8f8f" stroke-width="1"/><rect x="2" y="4" width="5" height="1.2" fill="#2f4fa0"/></svg><svg class="i" style="left:62.3px;top:149.254px;width:10px;height:11px;" viewBox="0 0 10 11"><path d="M0.5 2.3 L2.3 1.5 L4.3 5.3 L9.3 0.1 L10.1 1.2 L4.6 10.8 L4.0 10.8 Z" fill="url(#gchk)" stroke="#0c9a0c" stroke-width="0.5" stroke-linejoin="round"/></svg><svg class="i" style="left:80.3px;top:164.972px;width:10px;height:11px;" viewBox="0 0 10 11"><path d="M0.5 2.3 L2.3 1.5 L4.3 5.3 L9.3 0.1 L10.1 1.2 L4.6 10.8 L4.0 10.8 Z" fill="url(#gchk)" stroke="#0c9a0c" stroke-width="0.5" stroke-linejoin="round"/></svg><svg class="i" style="left:80.3px;top:180.69px;width:10px;height:11px;" viewBox="0 0 10 11"><path d="M0.5 2.3 L2.3 1.5 L4.3 5.3 L9.3 0.1 L10.1 1.2 L4.6 10.8 L4.0 10.8 Z" fill="url(#gchk)" stroke="#0c9a0c" stroke-width="0.5" stroke-linejoin="round"/></svg><svg class="i" style="left:80.3px;top:196.408px;width:10px;height:11px;" viewBox="0 0 10 11"><path d="M0.5 2.3 L2.3 1.5 L4.3 5.3 L9.3 0.1 L10.1 1.2 L4.6 10.8 L4.0 10.8 Z" fill="url(#gchk)" stroke="#0c9a0c" stroke-width="0.5" stroke-linejoin="round"/></svg><svg class="i" style="left:80.3px;top:212.126px;width:10px;height:11px;" viewBox="0 0 10 11"><path d="M0.5 2.3 L2.3 1.5 L4.3 5.3 L9.3 0.1 L10.1 1.2 L4.6 10.8 L4.0 10.8 Z" fill="url(#gchk)" stroke="#0c9a0c" stroke-width="0.5" stroke-linejoin="round"/></svg><svg class="i" style="left:80.3px;top:227.844px;width:10px;height:11px;" viewBox="0 0 10 11"><path d="M0.5 2.3 L2.3 1.5 L4.3 5.3 L9.3 0.1 L10.1 1.2 L4.6 10.8 L4.0 10.8 Z" fill="url(#gchk)" stroke="#0c9a0c" stroke-width="0.5" stroke-linejoin="round"/></svg><svg class="i" style="left:80.3px;top:243.56199999999998px;width:10px;height:11px;" viewBox="0 0 10 11"><path d="M0.5 2.3 L2.3 1.5 L4.3 5.3 L9.3 0.1 L10.1 1.2 L4.6 10.8 L4.0 10.8 Z" fill="url(#gchk)" stroke="#0c9a0c" stroke-width="0.5" stroke-linejoin="round"/></svg><svg class="i" style="left:80.3px;top:259.28000000000003px;width:10px;height:11px;" viewBox="0 0 10 11"><path d="M0.5 2.3 L2.3 1.5 L4.3 5.3 L9.3 0.1 L10.1 1.2 L4.6 10.8 L4.0 10.8 Z" fill="url(#gchk)" stroke="#0c9a0c" stroke-width="0.5" stroke-linejoin="round"/></svg><svg class="i" style="left:80.3px;top:274.99800000000005px;width:10px;height:11px;" viewBox="0 0 10 11"><path d="M0.5 2.3 L2.3 1.5 L4.3 5.3 L9.3 0.1 L10.1 1.2 L4.6 10.8 L4.0 10.8 Z" fill="url(#gchk)" stroke="#0c9a0c" stroke-width="0.5" stroke-linejoin="round"/></svg><svg class="i" style="left:80.3px;top:290.716px;width:10px;height:11px;" viewBox="0 0 10 11"><path d="M0.5 2.3 L2.3 1.5 L4.3 5.3 L9.3 0.1 L10.1 1.2 L4.6 10.8 L4.0 10.8 Z" fill="url(#gchk)" stroke="#0c9a0c" stroke-width="0.5" stroke-linejoin="round"/></svg><svg class="i" style="left:80.3px;top:306.434px;width:10px;height:11px;" viewBox="0 0 10 11"><path d="M0.5 2.3 L2.3 1.5 L4.3 5.3 L9.3 0.1 L10.1 1.2 L4.6 10.8 L4.0 10.8 Z" fill="url(#gchk)" stroke="#0c9a0c" stroke-width="0.5" stroke-linejoin="round"/></svg><svg class="i" style="left:80.3px;top:322.15200000000004px;width:10px;height:11px;" viewBox="0 0 10 11"><path d="M0.5 2.3 L2.3 1.5 L4.3 5.3 L9.3 0.1 L10.1 1.2 L4.6 10.8 L4.0 10.8 Z" fill="url(#gchk)" stroke="#0c9a0c" stroke-width="0.5" stroke-linejoin="round"/></svg><svg class="i" style="left:80.3px;top:337.87px;width:10px;height:11px;" viewBox="0 0 10 11"><path d="M0.5 2.3 L2.3 1.5 L4.3 5.3 L9.3 0.1 L10.1 1.2 L4.6 10.8 L4.0 10.8 Z" fill="url(#gchk)" stroke="#0c9a0c" stroke-width="0.5" stroke-linejoin="round"/></svg><svg class="i" style="left:80.3px;top:353.588px;width:10px;height:11px;" viewBox="0 0 10 11"><path d="M0.5 2.3 L2.3 1.5 L4.3 5.3 L9.3 0.1 L10.1 1.2 L4.6 10.8 L4.0 10.8 Z" fill="url(#gchk)" stroke="#0c9a0c" stroke-width="0.5" stroke-linejoin="round"/></svg><svg class="i" style="left:80.3px;top:369.30600000000004px;width:10px;height:11px;" viewBox="0 0 10 11"><path d="M0.5 2.3 L2.3 1.5 L4.3 5.3 L9.3 0.1 L10.1 1.2 L4.6 10.8 L4.0 10.8 Z" fill="url(#gchk)" stroke="#0c9a0c" stroke-width="0.5" stroke-linejoin="round"/></svg><svg class="i" style="left:80.3px;top:385.024px;width:10px;height:11px;" viewBox="0 0 10 11"><path d="M0.5 2.3 L2.3 1.5 L4.3 5.3 L9.3 0.1 L10.1 1.2 L4.6 10.8 L4.0 10.8 Z" fill="url(#gchk)" stroke="#0c9a0c" stroke-width="0.5" stroke-linejoin="round"/></svg><svg class="i" style="left:80.3px;top:400.742px;width:10px;height:11px;" viewBox="0 0 10 11"><path d="M0.5 2.3 L2.3 1.5 L4.3 5.3 L9.3 0.1 L10.1 1.2 L4.6 10.8 L4.0 10.8 Z" fill="url(#gchk)" stroke="#0c9a0c" stroke-width="0.5" stroke-linejoin="round"/></svg><svg class="i" style="left:80.3px;top:416.46000000000004px;width:10px;height:11px;" viewBox="0 0 10 11"><path d="M0.5 2.3 L2.3 1.5 L4.3 5.3 L9.3 0.1 L10.1 1.2 L4.6 10.8 L4.0 10.8 Z" fill="url(#gchk)" stroke="#0c9a0c" stroke-width="0.5" stroke-linejoin="round"/></svg><svg class="i" style="left:80.3px;top:432.178px;width:10px;height:11px;" viewBox="0 0 10 11"><path d="M0.5 2.3 L2.3 1.5 L4.3 5.3 L9.3 0.1 L10.1 1.2 L4.6 10.8 L4.0 10.8 Z" fill="url(#gchk)" stroke="#0c9a0c" stroke-width="0.5" stroke-linejoin="round"/></svg><svg class="i" style="left:80.3px;top:447.896px;width:10px;height:11px;" viewBox="0 0 10 11"><path d="M0.5 2.3 L2.3 1.5 L4.3 5.3 L9.3 0.1 L10.1 1.2 L4.6 10.8 L4.0 10.8 Z" fill="url(#gchk)" stroke="#0c9a0c" stroke-width="0.5" stroke-linejoin="round"/></svg><svg class="i" style="left:80.3px;top:463.61400000000003px;width:10px;height:11px;" viewBox="0 0 10 11"><path d="M0.5 2.3 L2.3 1.5 L4.3 5.3 L9.3 0.1 L10.1 1.2 L4.6 10.8 L4.0 10.8 Z" fill="url(#gchk)" stroke="#0c9a0c" stroke-width="0.5" stroke-linejoin="round"/></svg><svg class="i" style="left:80.3px;top:479.332px;width:10px;height:11px;" viewBox="0 0 10 11"><path d="M0.5 2.3 L2.3 1.5 L4.3 5.3 L9.3 0.1 L10.1 1.2 L4.6 10.8 L4.0 10.8 Z" fill="url(#gchk)" stroke="#0c9a0c" stroke-width="0.5" stroke-linejoin="round"/></svg><svg class="i" style="left:80.3px;top:495.05px;width:10px;height:11px;" viewBox="0 0 10 11"><path d="M0.5 2.3 L2.3 1.5 L4.3 5.3 L9.3 0.1 L10.1 1.2 L4.6 10.8 L4.0 10.8 Z" fill="url(#gchk)" stroke="#0c9a0c" stroke-width="0.5" stroke-linejoin="round"/></svg><svg class="i" style="left:80.3px;top:510.76800000000003px;width:10px;height:11px;" viewBox="0 0 10 11"><path d="M0.5 2.3 L2.3 1.5 L4.3 5.3 L9.3 0.1 L10.1 1.2 L4.6 10.8 L4.0 10.8 Z" fill="url(#gchk)" stroke="#0c9a0c" stroke-width="0.5" stroke-linejoin="round"/></svg><svg class="i" style="left:47px;top:527.686px;width:9px;height:9px;" viewBox="0 0 9 9"><rect x="0.5" y="0.5" width="8" height="8" rx="1.5" fill="url(#gexp)" stroke="#8e8f8f" stroke-width="1"/><rect x="2" y="4" width="5" height="1.2" fill="#2f4fa0"/></svg><svg class="i" style="left:62.3px;top:526.486px;width:10px;height:11px;" viewBox="0 0 10 11"><path d="M0.5 2.3 L2.3 1.5 L4.3 5.3 L9.3 0.1 L10.1 1.2 L4.6 10.8 L4.0 10.8 Z" fill="url(#gchk)" stroke="#0c9a0c" stroke-width="0.5" stroke-linejoin="round"/></svg><svg class="i" style="left:80.3px;top:542.2040000000001px;width:10px;height:11px;" viewBox="0 0 10 11"><path d="M0.5 2.3 L2.3 1.5 L4.3 5.3 L9.3 0.1 L10.1 1.2 L4.6 10.8 L4.0 10.8 Z" fill="url(#gchk)" stroke="#0c9a0c" stroke-width="0.5" stroke-linejoin="round"/></svg><svg class="i" style="left:80.3px;top:557.922px;width:10px;height:11px;" viewBox="0 0 10 11"><path d="M0.5 2.3 L2.3 1.5 L4.3 5.3 L9.3 0.1 L10.1 1.2 L4.6 10.8 L4.0 10.8 Z" fill="url(#gchk)" stroke="#0c9a0c" stroke-width="0.5" stroke-linejoin="round"/></svg><svg class="i" style="left:80.3px;top:573.64px;width:10px;height:11px;" viewBox="0 0 10 11"><path d="M0.5 2.3 L2.3 1.5 L4.3 5.3 L9.3 0.1 L10.1 1.2 L4.6 10.8 L4.0 10.8 Z" fill="url(#gchk)" stroke="#0c9a0c" stroke-width="0.5" stroke-linejoin="round"/></svg><svg class="i" style="left:80.3px;top:589.3580000000001px;width:10px;height:11px;" viewBox="0 0 10 11"><path d="M0.5 2.3 L2.3 1.5 L4.3 5.3 L9.3 0.1 L10.1 1.2 L4.6 10.8 L4.0 10.8 Z" fill="url(#gchk)" stroke="#0c9a0c" stroke-width="0.5" stroke-linejoin="round"/></svg><svg class="i" style="left:47px;top:606.2760000000001px;width:9px;height:9px;" viewBox="0 0 9 9"><rect x="0.5" y="0.5" width="8" height="8" rx="1.5" fill="url(#gexp)" stroke="#8e8f8f" stroke-width="1"/><rect x="2" y="4" width="5" height="1.2" fill="#2f4fa0"/></svg><svg class="i" style="left:62.3px;top:605.076px;width:10px;height:11px;" viewBox="0 0 10 11"><path d="M0.5 2.3 L2.3 1.5 L4.3 5.3 L9.3 0.1 L10.1 1.2 L4.6 10.8 L4.0 10.8 Z" fill="url(#gchk)" stroke="#0c9a0c" stroke-width="0.5" stroke-linejoin="round"/></svg><svg class="i" style="left:80.3px;top:620.794px;width:10px;height:11px;" viewBox="0 0 10 11"><path d="M0.5 2.3 L2.3 1.5 L4.3 5.3 L9.3 0.1 L10.1 1.2 L4.6 10.8 L4.0 10.8 Z" fill="url(#gchk)" stroke="#0c9a0c" stroke-width="0.5" stroke-linejoin="round"/></svg><svg class="i" style="left:80.3px;top:636.5120000000001px;width:10px;height:11px;" viewBox="0 0 10 11"><path d="M0.5 2.3 L2.3 1.5 L4.3 5.3 L9.3 0.1 L10.1 1.2 L4.6 10.8 L4.0 10.8 Z" fill="url(#gchk)" stroke="#0c9a0c" stroke-width="0.5" stroke-linejoin="round"/></svg><svg class="i" style="left:80.3px;top:652.23px;width:10px;height:11px;" viewBox="0 0 10 11"><path d="M0.5 2.3 L2.3 1.5 L4.3 5.3 L9.3 0.1 L10.1 1.2 L4.6 10.8 L4.0 10.8 Z" fill="url(#gchk)" stroke="#0c9a0c" stroke-width="0.5" stroke-linejoin="round"/></svg><svg class="i" style="left:80.3px;top:667.948px;width:10px;height:11px;" viewBox="0 0 10 11"><path d="M0.5 2.3 L2.3 1.5 L4.3 5.3 L9.3 0.1 L10.1 1.2 L4.6 10.8 L4.0 10.8 Z" fill="url(#gchk)" stroke="#0c9a0c" stroke-width="0.5" stroke-linejoin="round"/></svg><svg class="i" style="left:80.3px;top:683.666px;width:10px;height:11px;" viewBox="0 0 10 11"><path d="M0.5 2.3 L2.3 1.5 L4.3 5.3 L9.3 0.1 L10.1 1.2 L4.6 10.8 L4.0 10.8 Z" fill="url(#gchk)" stroke="#0c9a0c" stroke-width="0.5" stroke-linejoin="round"/></svg><svg class="i" style="left:47px;top:700.5840000000001px;width:9px;height:9px;" viewBox="0 0 9 9"><rect x="0.5" y="0.5" width="8" height="8" rx="1.5" fill="url(#gexp)" stroke="#8e8f8f" stroke-width="1"/><rect x="2" y="4" width="5" height="1.2" fill="#2f4fa0"/></svg><svg class="i" style="left:62.3px;top:699.384px;width:10px;height:11px;" viewBox="0 0 10 11"><path d="M0.5 2.3 L2.3 1.5 L4.3 5.3 L9.3 0.1 L10.1 1.2 L4.6 10.8 L4.0 10.8 Z" fill="url(#gchk)" stroke="#0c9a0c" stroke-width="0.5" stroke-linejoin="round"/></svg><svg class="i" style="left:80.3px;top:715.102px;width:10px;height:11px;" viewBox="0 0 10 11"><path d="M0.5 2.3 L2.3 1.5 L4.3 5.3 L9.3 0.1 L10.1 1.2 L4.6 10.8 L4.0 10.8 Z" fill="url(#gchk)" stroke="#0c9a0c" stroke-width="0.5" stroke-linejoin="round"/></svg><svg class="i" style="left:39.5px;top:98.5px;width:18px;height:17px" viewBox="0 0 18 17">
 <rect x="0.8" y="4.6" width="6" height="8.4" fill="#c8daf0" stroke="#7a90b0" stroke-width="0.6"/>
 <rect x="0.9" y="5" width="1.5" height="8" fill="#e8b040"/>
 <rect x="2.6" y="0.7" width="13.8" height="12.4" fill="url(#gwin)" stroke="#1a2a5a" stroke-width="0.9"/>
 <rect x="2.6" y="0.7" width="13.8" height="2.2" fill="#34a834"/>
 <path d="M8.6 4.6 A2.2 3 0 1 0 8.6 9.4" fill="none" stroke="#139a13" stroke-width="1.5"/>
 <path d="M10.6 3.8 L10.2 10.6 M13 3.8 L12.6 10.6 M9.4 5.8 H14.6 M9.2 8.4 H14.4" stroke="#139a13" stroke-width="1.2"/>
 <rect x="3.2" y="10.4" width="7" height="5.2" fill="#dce8f8" stroke="#1a2a5a" stroke-width="0.8"/>
 <path d="M4.4 13.2H9" stroke="#3a7ae0" stroke-width="1.1"/>
</svg><div class="t" style="left:60.8px;top:115.76px;font-size:12px;line-height:12px;color:#111;letter-spacing:2.6px">{}</div></div><div class="t" style="left:45.60px;top:7.53px;font-size:13.2px;line-height:13.2px;color:#1e1e1e;transform:scaleX(0.8581);">Unit Test Ses...- LibraryTests</div><div class="t" style="left:29.75px;top:36.57px;font-size:12.2px;line-height:12.2px;color:#111;font-weight:bold;transform:scaleX(0.9308);">LibraryTests</div><div class="t" style="left:26.25px;top:81.93px;font-size:11.6px;line-height:11.6px;color:#333;transform:scaleX(0.9771);">40</div><div class="t" style="left:100.60px;top:81.93px;font-size:11.6px;line-height:11.6px;color:#333;transform:scaleX(1.0197);">40</div><div class="t" style="left:176.25px;top:81.93px;font-size:11.6px;line-height:11.6px;color:#333;transform:scaleX(0.9305);">0</div><div class="t" style="left:250.50px;top:81.93px;font-size:11.6px;line-height:11.6px;color:#333;transform:scaleX(0.9771);">0</div><div class="t" style="left:325.25px;top:81.93px;font-size:11.6px;line-height:11.6px;color:#333;transform:scaleX(0.9305);">0</div><div class="t" style="left:565.50px;top:59.76px;font-size:11.8px;line-height:11.8px;color:#1e1e1e;transform:scaleX(0.9652);">Group by:</div><div class="t" style="left:625.60px;top:60.71px;font-size:11.8px;line-height:11.8px;color:#111;transform:scaleX(0.9615);">Projects and Namespaces</div><div class="t" style="left:30.60px;top:749.18px;font-size:11.6px;line-height:11.6px;color:#111;font-weight:bold;transform:scaleX(0.9451);">Output</div>
</body></html>
